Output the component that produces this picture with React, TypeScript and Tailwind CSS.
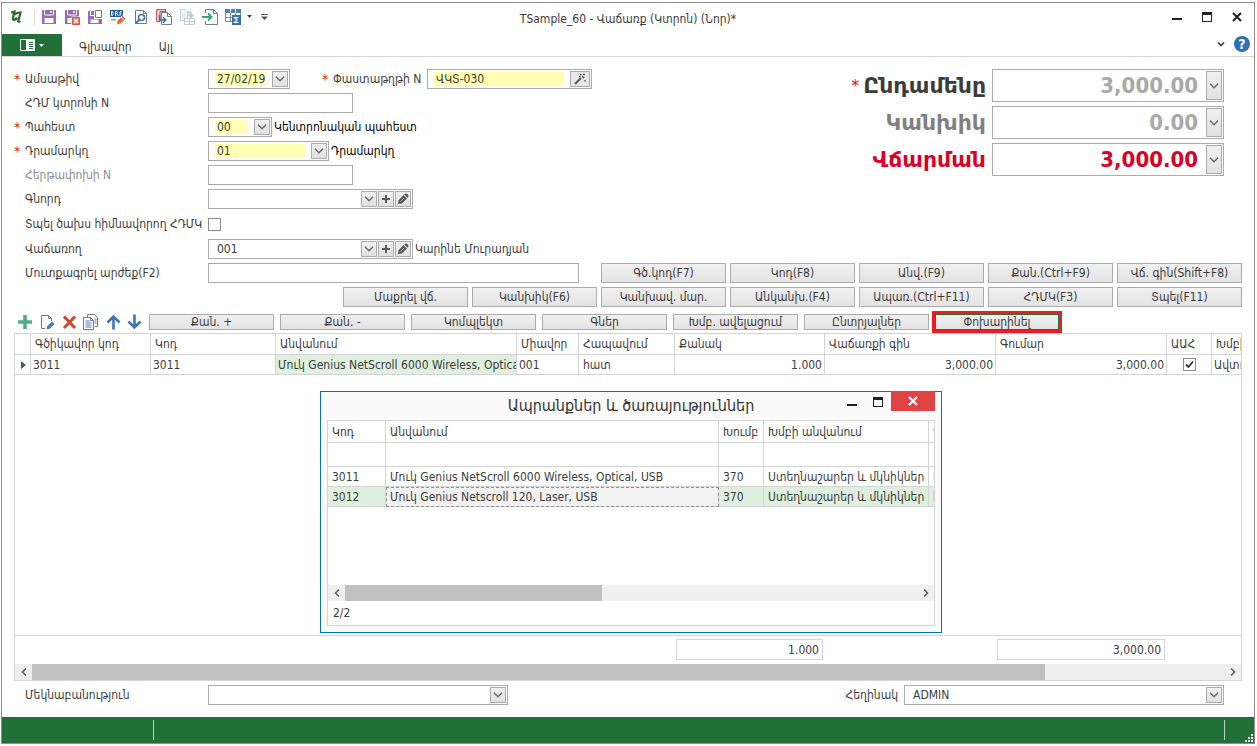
import { ReactNode, useState } from 'react';

const totals = [
  { id: 'total', label: 'Ընդամենը', value: '3,000.00', required: true, labelColor: 'text-[#3c3c3c]', valueColor: 'text-[#a9a9a9]' },
  { id: 'cash', label: 'Կանխիկ', value: '0.00', required: false, labelColor: 'text-[#808080]', valueColor: 'text-[#a9a9a9]' },
  { id: 'payment', label: 'Վճարման', value: '3,000.00', required: false, labelColor: 'text-[#dc0028]', valueColor: 'text-[#dc0028]' },
];

const firstActions = ['Գծ.կոդ(F7)', 'Կոդ(F8)', 'Անվ.(F9)', 'Քան.(Ctrl+F9)', 'Վճ. գին(Shift+F8)'];
const secondActions = ['Մաքրել վճ.', 'Կանխիկ(F6)', 'Կանխավ. մար.', 'Անկանխ.(F4)', 'Ապառ.(Ctrl+F11)', 'ՀԴՄԿ(F3)', 'Տպել(F11)'];
const gridActions = ['Քան. +', 'Քան. -', 'Կոմպլեկտ', 'Գներ', 'Խմբ. ավելացում', 'Ընտրյալներ'];

const gridHeaders = ['Գծիկավոր կոդ', 'Կոդ', 'Անվանում', 'Միավոր', 'Հապավում', 'Քանակ', 'Վաճառքի գին', 'Գումար', 'ԱԱՀ', 'Խմբի անվանում'];
const dialogHeaders = ['Կոդ', 'Անվանում', 'Խումբ', 'Խմբի անվանում', 'Չափ'];

const products = [
  { code: '3011', name: 'Մուկ Genius NetScroll 6000 Wireless, Optical, USB', group: '370', groupName: 'Ստեղնաշարեր և մկնիկներ', unit: 'հատ' },
  { code: '3012', name: 'Մուկ Genius Netscroll 120, Laser, USB', group: '370', groupName: 'Ստեղնաշարեր և մկնիկներ', unit: 'հատ' },
];

const smallButton = 'flex h-4 w-4 shrink-0 items-center justify-center border border-[#ababab] bg-linear-to-b from-[#f0f0f0] to-[#e1e1e1]';

function Icon({ children, size = 16 }: { children: ReactNode; size?: number }) {
  return (
    <svg width={size} height={size} viewBox="0 0 16 16" fill="none" className="shrink-0" aria-hidden="true">
      {children}
    </svg>
  );
}

function Chevron() {
  return (
    <svg width="10" height="6" viewBox="0 0 10 6" fill="none" stroke="#6a6a6a" strokeWidth="1.5" aria-hidden="true">
      <path d="M1 .8 5 4.8 9 .8" />
    </svg>
  );
}

function FieldTools({ name }: { name: string }) {
  return (
    <>
      <button className={smallButton} aria-label={`${name} +`}>
        <svg width="10" height="10" viewBox="0 0 10 10" stroke="#5a5a5a" strokeWidth="2" aria-hidden="true">
          <path d="M5 1v8M1 5h8" />
        </svg>
      </button>
      <button className={smallButton} aria-label={name}>
        <svg width="12" height="12" viewBox="0 0 12 12" aria-hidden="true">
          <path d="M1 11 1.6 7.2 6.4 2 10 5.6 4.8 10.4Z" fill="#5a5a5a" />
          <path d="M7.2 1.4 8 .8Q9.2 0 10.2 1L11 1.8Q12 2.8 11.2 4L10.6 4.8Z" fill="#5a5a5a" />
          <path d="M3.4 8.600 7.2 4.800" stroke="#c8c8c8" strokeWidth=".8" />
        </svg>
      </button>
    </>
  );
}

function Combo({ id, value, width, yellow, tools }: { id: string; value: string; width: string; yellow?: boolean; tools?: boolean }) {
  return (
    <div className={`flex h-5 items-center gap-px border border-[#ababab] bg-white p-px ${width}`}>
      <select
        id={id}
        defaultValue={value}
        className={`mr-[5px] ml-[5px] h-3.5 min-w-0 flex-1 appearance-none px-0.5 leading-[14px] outline-none ${yellow ? 'bg-[#ffffb3]' : ''}`}
      >
        <option>{value}</option>
      </select>
      <button className={smallButton} tabIndex={-1} aria-label={value || id}>
        <Chevron />
      </button>
      {tools && <FieldTools name={id} />}
    </div>
  );
}

function Row({ id, label, required, dim, tall, children }: { id: string; label: string; required?: boolean; dim?: boolean; tall?: boolean; children: ReactNode }) {
  return (
    <div className={`flex items-center ${tall ? 'h-[22px]' : 'h-5'}`}>
      <Label id={id} label={label} required={required} dim={dim} />
      {children}
    </div>
  );
}

function Label({ id, label, required, dim }: { id: string; label: string; required?: boolean; dim?: boolean }) {
  return (
    <label htmlFor={id} className={`flex w-[194px] shrink-0 whitespace-nowrap ${dim ? 'text-[#8c8c8c]' : ''}`}>
      <span className="w-[11px] text-sm leading-4 text-[#ff0000]">{required && '*'}</span>
      {label}
    </label>
  );
}

function ActionButton({ children, short }: { children: ReactNode; short?: boolean }) {
  return (
    <button
      className={`w-[125px] min-w-0 overflow-hidden border border-[#ababab] bg-linear-to-b from-[#f0f0f0] to-[#e3e3e3] whitespace-nowrap ${
        short ? 'h-4 leading-[14px]' : 'h-5 leading-[18px]'
      }`}
    >
      {children}
    </button>
  );
}

function ScrollBar({ thumb }: { thumb: string }) {
  return (
    <div className="flex h-4 bg-[#efefef]">
      <button className="flex w-[17px] shrink-0 items-center justify-center" aria-label="<">
        <svg width="6" height="8" viewBox="0 0 6 8" fill="none" stroke="#606060" strokeWidth="1.6"><path d="M5 .5 1.5 4 5 7.5" /></svg>
      </button>
      <div className="flex-1">
        <div className={`h-4 bg-[#c0c0c0] ${thumb}`} />
      </div>
      <button className="flex w-[17px] shrink-0 items-center justify-center" aria-label=">">
        <svg width="6" height="8" viewBox="0 0 6 8" fill="none" stroke="#606060" strokeWidth="1.6"><path d="M1 .5 4.5 4 1 7.5" /></svg>
      </button>
    </div>
  );
}

function WindowButtons() {
  return (
    <div className="flex items-center gap-5 pr-3 pb-1">
      <button aria-label="_"><svg width="10" height="10" viewBox="0 0 10 10" className="block"><path d="M0 6h10v2H0z" fill="#222" /></svg></button>
      <button aria-label="□"><svg width="10" height="10" viewBox="0 0 10 10" className="block"><path d="M0 0h10v10H0zM1 3v6h8V3z" fill="#222" fillRule="evenodd" /></svg></button>
      <button aria-label="×"><svg width="10" height="10" viewBox="0 0 10 10" className="block"><path d="M1 1l8 8M9 1l-8 8" stroke="#222" strokeWidth="2" /></svg></button>
    </div>
  );
}

function Floppy({ children }: { children?: ReactNode }) {
  return (
    <Icon>
      <path d="M1 1h14v14H1z" fill="#946bb5" />
      <path d="M3 1h1v5H3zM12 1h1v5h-1zM4 5.500h8v1H4zM9 2h1.500v2H9z" fill="#fff" />
      <path d="M3.500 9h9v5h-9z" fill="#fff" />
      {children}
    </Icon>
  );
}

function QuickAccess() {
  return (
    <div className="flex items-center pb-1">
      <svg width="14" height="16" viewBox="0 0 14 16" fill="none" stroke="#2b6a2d" className="ml-[7px]" aria-hidden="true">
        <path d="M2 3.500 5.500 2.500 3.800 9.500Q3.800 11.500 6 10.500L8 8.500" strokeWidth="2.200" />
        <path d="M5.500 5.500 8 4 11.500 3.500 9.200 12.500 11.500 13" strokeWidth="2.200" />
        <path d="M4 10.500 8.500 10" strokeWidth="1.500" />
      </svg>
      <span className="mr-1.5 ml-[11px] h-4 w-px bg-[#dcdcdc]" />
      <div className="flex gap-[7px]">
        <button aria-label="Save"><Floppy /></button>
        <button aria-label="Save and close">
          <Floppy>
            <path d="M7.500 7.500H16V16H7.500z" fill="#fff" />
            <path d="M8.500 8.500h7v7h-7z" fill="#e27a63" stroke="#d9573c" />
            <path d="m10 10 4 4m0-4-4 4" stroke="#fff" strokeWidth="1.400" />
          </Floppy>
        </button>
        <button aria-label="Save and new">
          <Icon>
            <path d="M1 2h2v5h4v2h8v6H1z" fill="#946bb5" />
            <path d="M4 2h3v4H4z" fill="#946bb5" />
            <path d="M3.500 10.500h8V14h-8z" fill="#fff" />
            <path d="M7 0h9v10H7z" fill="#fff" />
            <path d="M8.500 1.500h6v7h-6z" fill="#fff" stroke="#757575" />
          </Icon>
        </button>
        <button aria-label="Draft">
          <Icon>
            <path d="M0 1h13v7H0z" fill="#1f5a96" />
            <path d="M1 10h5v1.500H1z" fill="#9a9a9a" />
            <path d="M1.500 2.500v4h1Q4.200 4.500 2.500 2.500zM5.500 7V2.500H7Q8.300 3.500 7 4.500H5.500M7 4.500 8.200 7M12 2.500H10V7M10 4.700h1.600" stroke="#fff" strokeWidth=".9" />
            <path d="M6.500 15.500 7.300 11.500 12.500 6.500 15.800 9.800 10.500 14.900z" fill="#e0694a" stroke="#fff" strokeWidth=".6" />
            <path d="m11 8 3.300 3.300" stroke="#fff" strokeWidth=".8" />
          </Icon>
        </button>
        <button aria-label="Preview">
          <Icon>
            <path d="M2.500 1.500h8l3 3v10h-11z" fill="#fff" stroke="#7a7a7a" />
            <path d="M10.500 1.500v3h3" stroke="#7a7a7a" />
            <circle cx="8.500" cy="8.500" r="3" fill="#fff" stroke="#3b76b5" strokeWidth="1.600" />
            <path d="m6.200 10.800-3.700 3.700" stroke="#3b76b5" strokeWidth="2" />
          </Icon>
        </button>
        <button aria-label="Copy from">
          <Icon>
            <path d="M.700.700h9v2H4v10H.700z" fill="#f7e0e0" stroke="#b03a45" />
            <path d="M5.500 3.500h6l4 4v8h-10z" fill="#fff" stroke="#7a7a7a" />
            <path d="M11.500 3.500v4h4" stroke="#7a7a7a" />
            <path d="M3.500 6v5H9M7 8.300 9.800 11 7 13.700" stroke="#2f6db0" strokeWidth="1.500" />
          </Icon>
        </button>
        <button aria-label="Copy lines" disabled>
          <Icon>
            <path d="M1.500.500h5l2 2v9h-7z" fill="#fff" stroke="#b9cde0" />
            <path d="M3 5h4M3 7h4M3 9h4" stroke="#cdddeb" />
            <path d="M5.500 9.500h10v6h-10zM5.500 12.500h10M10.500 9.500v6" fill="#fff" stroke="#c9c9c9" />
            <path d="M8 3.500h4v4M9.500 5.500 12 8.200 14.500 5.500" stroke="#a9c8e4" strokeWidth="1.400" />
          </Icon>
        </button>
        <button aria-label="Import">
          <Icon>
            <path d="M3.500 4V.500h8l4 4v11h-12V12" stroke="#7a7a7a" />
            <path d="M11.500.500v4h4" stroke="#7a7a7a" />
            <path d="M0 8h9M6 4.500 9.500 8 6 11.500" stroke="#3fa37b" strokeWidth="2" />
          </Icon>
        </button>
        <button aria-label="Totals">
          <Icon>
            <path d="M0 0h16v4H0z" fill="#4a7fb8" />
            <path d="M5.500 0v4M10.500 0v4" stroke="#fff" />
            <path d="M.500 4v8.500H7M.500 8.500H7M5.500 4v8.500M10.500 4v2M15.500 4v2" stroke="#8a8a8a" />
            <path d="M7 6h9v10H7z" fill="#3b70ad" />
            <path d="M13.500 8.500H9.500l2.500 2.500L9.500 13.500h4" stroke="#fff" strokeWidth="1.200" />
          </Icon>
        </button>
      </div>
      <svg width="5" height="3" viewBox="0 0 5 3" className="ml-1.5"><path d="M0 0h5L2.500 3z" fill="#444" /></svg>
      <svg width="7" height="6" viewBox="0 0 7 6" className="ml-[9px]"><path d="M0 0h7v1H0zM0 2.500h7L3.500 6z" fill="#555" /></svg>
    </div>
  );
}

function GridToolbar() {
  return (
    <div className="mt-[7px] flex h-4 gap-1.5 pl-[3px]">
      <button aria-label="Add"><Icon><path d="M8 1v14M1 8h14" stroke="#56ab85" strokeWidth="3.600" /></Icon></button>
      <button aria-label="Edit">
        <Icon>
          <path d="M12.500 7V4.500l-3-3h-7v13H6" stroke="#7a7a7a" />
          <path d="M9.500 1.500v3h3" stroke="#7a7a7a" />
          <path d="M7.500 15.500 8.200 12.200 13 7.500 15.500 10 10.700 14.800z" fill="#4a7fb8" />
        </Icon>
      </button>
      <button aria-label="Delete"><Icon><path d="m3 2.500 11 11.500M14 2.500 3 14" stroke="#cf4b30" strokeWidth="3.200" /></Icon></button>
      <button aria-label="Copy">
        <Icon>
          <path d="M4.500 3V.500h7l3 3v9H12" stroke="#7a7a7a" />
          <path d="M.500 3.500h7l3 3v9H.500z" fill="#fff" stroke="#7a7a7a" />
          <path d="M2.500 7h4M2.500 9h6M2.500 11h6M2.500 13h6" stroke="#4a7fb8" />
          <path d="M7.500 3.500v3h3M11.500 5h2M11.500 7h2M11.500 9h2" stroke="#7a7a7a" />
        </Icon>
      </button>
      <button aria-label="Up"><Icon><path d="M8.500 15.500V2.500M2.500 8.500l6-6 6 6" stroke="#3b76b5" strokeWidth="2.600" /></Icon></button>
      <button aria-label="Down"><Icon><path d="M7.500.500v13M1.500 7.500l6 6 6-6" stroke="#3b76b5" strokeWidth="2.600" /></Icon></button>
      {gridActions.map((action) => (
        <ActionButton key={action} short>{action}</ActionButton>
      ))}
      <button className="h-4 w-[124px] border border-[#217037] bg-linear-to-b from-[#f0f0f0] to-[#e3e3e3] leading-[14px] outline-3 outline-[#ed1c24]">
        Փոխարինել
      </button>
    </div>
  );
}

function ItemsGrid() {
  const [vat, setVat] = useState(true);
  const cell = 'overflow-hidden border-r border-b border-[#d0d4d8] px-0.5 whitespace-nowrap';

  return (
    <div className="overflow-hidden">
      <table className="w-full table-fixed border-separate border-spacing-0">
        <colgroup>
          <col className="w-4" />
          <col className="w-[120px]" />
          <col className="w-[125px]" />
          <col className="w-[241px]" />
          <col className="w-[62px]" />
          <col className="w-24" />
          <col className="w-[150px]" />
          <col className="w-[171px]" />
          <col className="w-[171px]" />
          <col className="w-[45px]" />
          <col />
        </colgroup>
        <thead>
          <tr className="h-[21px]">
            <td className={cell} />
            {gridHeaders.map((header) => (
              <th key={header} className="overflow-hidden border-r border-b border-[#d4d4d4] pl-1 text-left font-normal whitespace-nowrap last:border-r-0">
                {header}
              </th>
            ))}
          </tr>
        </thead>
        <tbody>
          <tr className="h-5">
            <td className={cell}>
              <svg width="5" height="8" viewBox="0 0 5 8" className="ml-1"><path d="M0 0 5 4 0 8z" fill="#555" /></svg>
            </td>
            <td className={cell}>3011</td>
            <td className={cell}>3011</td>
            <td className={`${cell} bg-[#dff0df]`}>{products[0].name}</td>
            <td className={cell}>001</td>
            <td className={cell}><span className="pl-0.5">հատ</span></td>
            <td className={`${cell} text-right`}>1.000</td>
            <td className={`${cell} text-right`}>3,000.00</td>
            <td className={`${cell} text-right`}>3,000.00</td>
            <td className={cell}>
              <span className="relative mx-auto block h-[13px] w-[13px]">
                <input
                  type="checkbox"
                  aria-label="ԱԱՀ"
                  checked={vat}
                  onChange={(e) => setVat(e.target.checked)}
                  className="block h-[13px] w-[13px] appearance-none border border-[#8c8c8c]"
                />
                {vat && (
                  <svg width="13" height="13" viewBox="0 0 13 13" fill="none" className="pointer-events-none absolute inset-0">
                    <path d="M3 6.500 5.500 9 10 3.500" stroke="#333" strokeWidth="1.800" />
                  </svg>
                )}
              </span>
            </td>
            <td className="overflow-hidden border-b border-[#d4d4d4] px-0.5 whitespace-nowrap">Ավտոմատ</td>
          </tr>
        </tbody>
      </table>
    </div>
  );
}

function ProductsDialog() {
  return (
    <section className="absolute top-[57px] left-[305px] flex h-[242px] w-[622px] flex-col border border-[#0072bc] bg-[#fafafa] px-1.5 pb-1.5">
      <header className="relative flex h-7 shrink-0 items-center justify-center">
        <h2 className="text-base leading-5 text-[#333]">Ապրանքներ և ծառայություններ</h2>
        <div className="absolute -top-px right-0 flex items-start">
          <button aria-label="_" className="mt-2 mr-4"><svg width="10" height="7" viewBox="0 0 10 7"><path d="M0 5h10v2H0z" fill="#222" /></svg></button>
          <button aria-label="□" className="mt-1.5 mr-2"><svg width="10" height="10" viewBox="0 0 10 10"><path d="M0 0h10v10H0zM1 3v6h8V3z" fill="#222" fillRule="evenodd" /></svg></button>
          <button aria-label="×" className="flex h-5 w-11 items-center justify-center bg-[#e04343]">
            <svg width="10" height="10" viewBox="0 0 10 10"><path d="M1 1l8 8M9 1l-8 8" stroke="#fff" strokeWidth="2.200" /></svg>
          </button>
        </div>
      </header>
      <div className="flex min-h-0 flex-1 flex-col border border-[#d4d4d4] bg-white">
        <div className="flex-1 overflow-hidden">
          <table className="w-full table-fixed border-separate border-spacing-0">
            <colgroup>
              <col className="w-[58px]" />
              <col className="w-[333px]" />
              <col className="w-[45px]" />
              <col className="w-[165px]" />
              <col />
            </colgroup>
            <thead>
              <tr className="h-[22px]">
                {dialogHeaders.map((header) => (
                  <th key={header} className="overflow-hidden border-r border-b border-[#d4d4d4] pl-1 text-left font-normal whitespace-nowrap last:border-r-0">
                    {header}
                  </th>
                ))}
              </tr>
            </thead>
            <tbody>
              <tr className="h-6">
                {dialogHeaders.map((header) => (
                  <td key={header} className="border-r border-b border-[#d4d4d4] last:border-r-0">
                    <input aria-label={header} className="block h-4 w-full px-1 outline-none" />
                  </td>
                ))}
              </tr>
              {products.map((product, index) => (
                <tr
                  key={product.code}
                  className={`h-5 [&>td]:overflow-hidden [&>td]:border-r [&>td]:border-b [&>td]:border-[#d4d4d4] [&>td]:pl-1 [&>td]:whitespace-nowrap [&>td:last-child]:border-r-0 ${index === 1 ? 'bg-[#dff0df]' : ''}`}
                >
                  <td>{product.code}</td>
                  <td className={index === 1 ? 'bg-[#f2f2f2] outline outline-offset-[-1px] outline-[#909090] outline-dashed' : ''}>{product.name}</td>
                  <td>{product.group}</td>
                  <td>{product.groupName}</td>
                  <td>{product.unit}</td>
                </tr>
              ))}
            </tbody>
          </table>
        </div>
        <ScrollBar thumb="w-[45%]" />
        <p className="h-6 pl-[5px] leading-6">2/2</p>
      </div>
    </section>
  );
}

export default function App() {
  return (
    <div className="flex min-h-screen bg-white pt-0.5 pr-0.5 pb-0.5 pl-px font-['DejaVu_Sans_Condensed','DejaVu_Sans',sans-serif] text-xs leading-4 text-[#3c3c3c]">
      <div className="flex min-w-0 flex-1 flex-col border border-[#8f8f8f]">
        <header className="relative flex h-[31px] items-center justify-between">
          <QuickAccess />
          <h1 className="absolute left-1/2 -translate-x-1/2">TSample_60 - Վաճառք (Կտրոն) (Նոր)*</h1>
          <WindowButtons />
        </header>

        <nav className="flex h-[23px] items-stretch border-b border-[#d4d4d4]">
          <button aria-label="Menu" className="flex w-[60px] items-center justify-center gap-1 bg-[#217037]">
            <svg width="15" height="12" viewBox="0 0 15 12" fill="none">
              <path d="M.500.500h14v11H.500zM6.500.500v11" stroke="#fff" />
              <path d="M7 1h7v10H7z" fill="#fff" />
              <path d="M9 3.500h4M9 5.500h4M9 7.500h4M9 9.500h4" stroke="#217037" />
            </svg>
            <svg width="5" height="3" viewBox="0 0 5 3"><path d="M0 0h5L2.500 3z" fill="#fff" /></svg>
          </button>
          <a href="#main" className="pt-[5px] pl-[17px]">Գլխավոր</a>
          <a href="#other" className="pt-[5px] pl-[27px]">Այլ</a>
          <div className="ml-auto flex items-center gap-[9px] pr-1 pb-0.5">
            <button aria-label="Collapse"><svg width="8" height="5" viewBox="0 0 8 5" fill="none"><path d="M1 .500l3 3 3-3" stroke="#444" strokeWidth="1.700" /></svg></button>
            <button aria-label="Help" className="h-4 w-4 rounded-full bg-[#2d6fb3] text-sm leading-4 font-bold text-white">?</button>
          </div>
        </nav>

        <main className="flex flex-1 flex-col px-3 pt-3">
          <div className="flex justify-between">
            <div className="flex flex-col gap-1">
              <Row id="date" label="Ամսաթիվ" required>
                <div className="flex h-5 w-[82px] items-center border border-[#ababab] p-px">
                  <input id="date" defaultValue="27/02/19" className="mr-1.5 ml-[5px] h-3.5 min-w-0 flex-1 bg-[#ffffb3] pl-0.5 outline-none" />
                  <button className={smallButton} aria-label="Ամսաթիվ"><Chevron /></button>
                </div>
                <label htmlFor="document" className="ml-8 flex w-[105px]">
                  <span className="w-[11px] text-sm leading-4 text-[#ff0000]">*</span>
                  <span className="whitespace-nowrap">Փաստաթղթի N</span>
                </label>
                <div className="flex h-5 w-[165px] items-center border border-[#ababab] p-px">
                  <input id="document" defaultValue="ՎԿՏ-030" className="mr-1.5 ml-[5px] h-3.5 min-w-0 flex-1 bg-[#ffffb3] pl-0.5 outline-none" />
                  <button className="flex h-4 w-5 items-center justify-center border border-[#ababab] bg-[#e8e8e8]" aria-label="Auto">
                    <svg width="12" height="12" viewBox="0 0 12 12" fill="none" stroke="#5a5a5a">
                      <path d="M1 11 7 5" strokeWidth="2.200" />
                      <path d="M6 1.500h1.500M9 1.500h2M9.500 3.500v2M5 3.500h1.500M11 7v1.500M8 3.500h1" strokeWidth="1.500" />
                    </svg>
                  </button>
                </div>
              </Row>
              <Row id="receipt" label="ՀԴՄ կտրոնի N">
                <input id="receipt" className="h-5 w-[145px] border border-[#ababab] px-2 outline-none" />
              </Row>
              <Row id="warehouse" label="Պահեստ" required>
                <Combo id="warehouse" value="00" width="w-16" yellow />
                <span className="pl-0.5 text-black">Կենտրոնական պահեստ</span>
              </Row>
              <Row id="register" label="Դրամարկղ" required>
                <Combo id="register" value="01" width="w-[121px]" yellow />
                <span className="pl-0.5 text-black">Դրամարկղ</span>
              </Row>
              <Row id="shift" label="Հերթափոխի N" dim>
                <input id="shift" className="h-5 w-[145px] border border-[#ababab] px-2 outline-none" />
              </Row>
              <Row id="buyer" label="Գնորդ">
                <Combo id="buyer" value="" width="w-[205px]" tools />
              </Row>
              <Row id="print" label="Տպել ծախս հիմնավորող ՀԴՄԿ" tall>
                <input id="print" type="checkbox" className="h-[13px] w-[13px] appearance-none border border-[#8c8c8c] checked:bg-[#217037]" />
              </Row>
              <Row id="seller" label="Վաճառող">
                <Combo id="seller" value="001" width="w-[205px]" tools />
                <span className="pl-0.5">Կարինե Մուրադյան</span>
              </Row>
            </div>

            <div className="flex flex-col gap-1 pr-[18px] text-[22px] leading-[31px] font-bold">
              {totals.map((total) => (
                <div key={total.id} className="flex items-center justify-end gap-1.5">
                  <label htmlFor={total.id} className={`flex items-center gap-1 font-['DejaVu_Sans',sans-serif] ${total.labelColor}`}>
                    {total.required && <span className="text-base leading-6 font-normal text-[#ff0000]">*</span>}
                    {total.label}
                  </label>
                  <div className="flex h-[33px] w-[232px] border border-[#ababab] p-px">
                    <input id={total.id} defaultValue={total.value} className={`min-w-0 flex-1 pr-2 text-right outline-none ${total.valueColor}`} />
                    <button aria-label={total.label} className="flex w-4 items-center justify-center border border-[#ababab] bg-linear-to-b from-[#f0f0f0] to-[#e1e1e1]">
                      <Chevron />
                    </button>
                  </div>
                </div>
              ))}
            </div>
          </div>

          <div className="mt-1 flex h-5 items-center">
            <Label id="value" label="Մուտքագրել արժեք(F2)" />
            <input id="value" className="h-5 w-[371px] border border-[#ababab] px-2 outline-none" />
            <div className="ml-auto flex gap-1">
              {firstActions.map((action) => (
                <ActionButton key={action}>{action}</ActionButton>
              ))}
            </div>
          </div>
          <div className="mt-1 flex justify-end gap-1">
            {secondActions.map((action) => (
              <ActionButton key={action}>{action}</ActionButton>
            ))}
          </div>

          <GridToolbar />

          <div className="relative mt-[3px] flex flex-1 flex-col border border-[#d4d4d4]">
            <ItemsGrid />
            <div className="mt-auto grid h-[29px] grid-cols-[16px_120px_125px_241px_62px_96px_150px_171px_171px_45px_1fr] border-t border-[#d4d4d4] pt-[3px]">
              <output className="col-start-7 mr-0.5 ml-px h-[21px] border border-[#d4d4d4] pr-[3px] text-right leading-5">1.000</output>
              <output className="col-start-9 mr-0.5 ml-px h-[21px] border border-[#d4d4d4] pr-[3px] text-right leading-5">3,000.00</output>
            </div>
            <ScrollBar thumb="w-[85%]" />
            <ProductsDialog />
          </div>

          <div className="flex items-center justify-between pt-1 pr-[18px] pb-3">
            <div className="flex items-center">
              <Label id="comment" label="Մեկնաբանություն" />
              <Combo id="comment" value="" width="w-[300px]" />
            </div>
            <div className="flex items-center gap-1.5">
              <label htmlFor="author">Հեղինակ</label>
              <Combo id="author" value="ADMIN" width="w-80" />
            </div>
          </div>
        </main>

        <footer className="flex h-[26px] items-center justify-between bg-[#217037]">
          <span className="ml-[151px] h-5 w-px bg-[#b5d3bd]" />
          <span className="flex h-full items-center">
            <span className="mr-5 h-5 w-px bg-[#b5d3bd]" />
            <svg width="8" height="8" viewBox="0 0 8 8" fill="#fff" className="mr-px mb-px self-end">
              <path d="M6 0h2v2H6zM3 3h2v2H3zM6 3h2v2H6zM0 6h2v2H0zM3 6h2v2H3zM6 6h2v2H6z" />
            </svg>
          </span>
        </footer>
      </div>
    </div>
  );
}
